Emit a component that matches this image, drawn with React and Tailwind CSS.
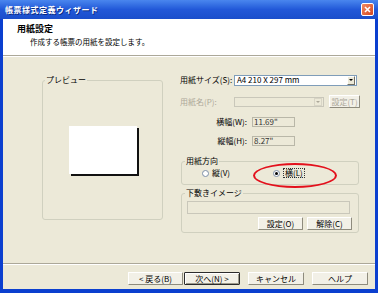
import React from "react";

const font = "font-['Noto_Sans_CJK_JP','Noto_Sans',sans-serif]";

function XpButton({ children, isDefault, disabled, className = "" }) {
    return (
        <div
            className={
                "flex items-center justify-center h-[13px] text-[8px] leading-[10px] rounded-[1px] " +
                (isDefault
                    ? "border border-[#2c2c2c] bg-[#f2f0e7] shadow-[inset_1px_1px_0_#fff,inset_-1px_-1px_0_#9d9a8c] "
                    : "border border-t-white border-l-white border-r-[#8e8b7d] border-b-[#8e8b7d] bg-[#f2f0e7] ") +
                (disabled ? "text-[#aca899] " : "text-black ") +
                className
            }
        >
            {children}
        </div>
    );
}

function Radio({ checked }) {
    return (
        <span className="w-[7px] h-[7px] rounded-full border border-[#7d8fa8] bg-white flex items-center justify-center">
            {checked && <span className="w-[3px] h-[3px] rounded-full bg-black" />}
        </span>
    );
}

export default function App() {
    return (
        <div className={"w-[378px] h-[293px] flex flex-col bg-[#0b3fcf] " + font}>
            {/* Title bar */}
            <div className="h-[19px] flex items-center pl-[5px] pr-[4px] bg-gradient-to-b from-[#4a86ee] via-[#2258d8] to-[#1a4ecb]">
                <span className="text-white text-[8px] leading-[10px] font-bold tracking-[0.5px] [text-shadow:1px_1px_0_#0a2a80]">
                    帳票様式定義ウィザード
                </span>
                <div className="ml-auto w-[13px] h-[13px] rounded-[2px] border border-white bg-gradient-to-br from-[#f08a62] to-[#d4441c] flex items-center justify-center">
                    <svg width="7" height="7" viewBox="0 0 7 7">
                        <path d="M1 1 L6 6 M6 1 L1 6" stroke="#fff" strokeWidth="1.6" />
                    </svg>
                </div>
            </div>

            {/* Client */}
            <div className="flex-1 mx-[3px] mb-[4px] flex flex-col bg-[#ece9d8]">
                {/* Header */}
                <div className="h-[37px] bg-white border-b border-[#aca899] pl-[14px] pt-[4px]">
                    <div className="text-[9px] leading-[11px] font-bold text-black">用紙設定</div>
                    <div className="pl-[13px] mt-[3px] text-[7.5px] leading-[10px] text-black">
                        作成する帳票の用紙を設定します。
                    </div>
                </div>
                <div className="h-px bg-white" />

                {/* Main */}
                <div className="flex-1 flex pt-[18px] text-[8px] leading-[10px] text-black">
                    <fieldset className="ml-[39px] w-[121px] h-[145px] border border-[#d0d0bf] rounded-[3px]">
                        <legend className="ml-[2px] px-[1px] text-[8px] leading-[10px]">プレビュー</legend>
                        <div className="flex justify-center pt-[41px]">
                            <div className="w-[68px] h-[48px] bg-white shadow-[2px_2px_0_#111]" />
                        </div>
                    </fieldset>

                    <div className="ml-[17px] w-[180px] relative">
                        {/* 用紙サイズ */}
                        <div className="flex items-center h-[10px]">
                            <span className="w-[54px]">用紙サイズ(S):</span>
                            <div className="w-[123px] h-[11px] border border-[#7f9db9] bg-white flex items-center">
                                <span className="pl-[2px] flex-1">A4 210 X 297 mm</span>
                                <span className="w-[8px] h-[9px] mr-px bg-[#ece9d8] border border-t-white border-l-white border-r-[#716f64] border-b-[#716f64] flex items-center justify-center">
                                    <span className="w-0 h-0 border-l-[2px] border-r-[2px] border-t-[2px] border-l-transparent border-r-transparent border-t-black" />
                                </span>
                            </div>
                        </div>

                        {/* 用紙名 */}
                        <div className="flex items-center h-[13px] mt-[10px]">
                            <span className="w-[54px] text-[#aca899]">用紙名(P):</span>
                            <div className="w-[90px] h-[10px] border border-[#c9c7ba] bg-[#ece9d8] flex items-center justify-end">
                                <span className="w-[8px] h-[8px] mr-px border border-[#d8d5c6] flex items-center justify-center">
                                    <span className="w-0 h-0 border-l-[2px] border-r-[2px] border-t-[2px] border-l-transparent border-r-transparent border-t-[#aca899]" />
                                </span>
                            </div>
                            <XpButton disabled className="ml-[5px] w-[31px]">設定(T)</XpButton>
                        </div>

                        {/* 横幅 */}
                        <div className="flex items-center h-[10px] mt-[9px]">
                            <span className="w-[72px] text-right pr-[5px]">横幅(W):</span>
                            <div className="w-[43px] h-[10px] border border-[#b9b7a8] bg-[#ece9d8] pl-[1px] text-[#333] flex items-center">11.69"</div>
                        </div>

                        {/* 縦幅 */}
                        <div className="flex items-center h-[10px] mt-[9px]">
                            <span className="w-[72px] text-right pr-[5px]">縦幅(H):</span>
                            <div className="w-[43px] h-[10px] border border-[#b9b7a8] bg-[#ece9d8] pl-[1px] text-[#333] flex items-center">8.27"</div>
                        </div>

                        {/* 用紙方向 */}
                        <fieldset className="mt-[10px] ml-[1px] w-[178px] h-[29px] border border-[#d0d0bf] rounded-[3px]">
                            <legend className="ml-[3px] px-[1px]">用紙方向</legend>
                            <div className="flex items-center h-[10px] mt-[2px] pl-[20px]">
                                <div className="w-[71px] flex items-center gap-[3px]">
                                    <Radio />
                                    <span>縦(V)</span>
                                </div>
                                <div className="flex items-center gap-[3px]">
                                    <Radio checked />
                                    <span className="border border-dotted border-[#333] px-px leading-[8px]">横(L)</span>
                                </div>
                            </div>
                        </fieldset>

                        {/* 下敷きイメージ */}
                        <fieldset className="mt-[3px] ml-[1px] w-[178px] h-[45px] border border-[#d0d0bf] rounded-[3px]">
                            <legend className="ml-[3px] px-[1px]">下敷きイメージ</legend>
                            <div className="ml-[5px] mt-[3px] w-[163px] h-[13px] border border-[#c9c7ba] bg-[#ece9d8]" />
                            <div className="flex justify-end gap-[4px] pr-[6px] mt-[3px]">
                                <XpButton className="w-[45px]">設定(O)</XpButton>
                                <XpButton className="w-[45px]">解除(C)</XpButton>
                            </div>
                        </fieldset>

                        {/* annotation ellipse */}
                        <div className="absolute left-[73px] top-[88px] w-[84px] h-[25px] rounded-[50%] border-[2.5px] border-[#e3101c] pointer-events-none" />
                    </div>
                </div>

                {/* Bottom buttons */}
                <div className="border-t border-[#aca899]">
                    <div className="border-t border-white flex justify-end pt-[7px] pb-[4px] pr-[7px]">
                        <XpButton className="w-[55px]">&lt; 戻る(B)</XpButton>
                        <XpButton isDefault className="ml-px w-[56px]">次へ(N) &gt;</XpButton>
                        <XpButton className="ml-[8px] w-[56px]">キャンセル</XpButton>
                        <XpButton className="ml-[8px] w-[56px]">ヘルプ</XpButton>
                    </div>
                </div>
            </div>
        </div>
    );
}
